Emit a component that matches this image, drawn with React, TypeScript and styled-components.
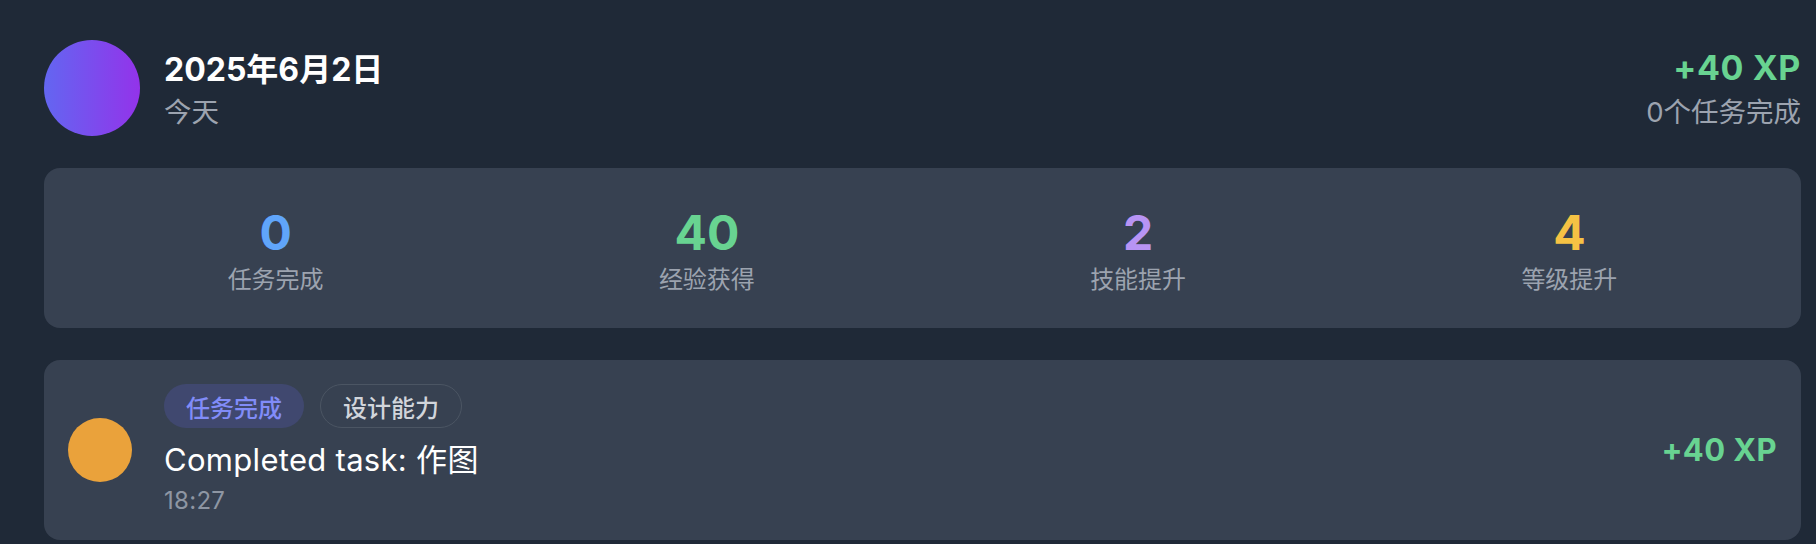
import React from 'react';
import styled, {createGlobalStyle} from 'styled-components';

const GlobalStyle = createGlobalStyle`
  html, body {
    margin: 0;
    padding: 0;
    background: #1f2937;
  }
  body {
    font-family: Inter, "Noto Sans CJK SC", "Noto Sans", sans-serif;
    color: #ffffff;
  }
  * {
    box-sizing: border-box;
  }
`;

type Stat = {value: number; label: string; color: string};

const stats: Stat[] = [
  {value: 0, label: '任务完成', color: '#60a5fa'},
  {value: 40, label: '经验获得', color: '#68d391'},
  {value: 2, label: '技能提升', color: '#b794f4'},
  {value: 4, label: '等级提升', color: '#f6c244'},
];

const App = () => {
  return (
    <>
      <GlobalStyle />
      <Page>
        <Header>
          <DayInfo>
            <Avatar />
            <DayText>
              <DateTitle>2025年6月2日</DateTitle>
              <SubText>今天</SubText>
            </DayText>
          </DayInfo>
          <DaySummary>
            <HeaderXp>+40 XP</HeaderXp>
            <SubText>0个任务完成</SubText>
          </DaySummary>
        </Header>

        <StatsCard>
          {stats.map((s) => (
            <StatItem key={s.label}>
              <StatValue color={s.color}>{s.value}</StatValue>
              <StatLabel>{s.label}</StatLabel>
            </StatItem>
          ))}
        </StatsCard>

        <EventCard>
          <EventDot />
          <EventBody>
            <Tags>
              <Tag variant="type">任务完成</Tag>
              <Tag variant="skill">设计能力</Tag>
            </Tags>
            <EventTitle>Completed task: 作图</EventTitle>
            <EventTime>18:27</EventTime>
          </EventBody>
          <EventXp>+40 XP</EventXp>
        </EventCard>
      </Page>
    </>
  );
};

const Page = styled.div`
  min-height: 100vh;
  padding: 40px 15px 0 44px;
  display: flex;
  flex-direction: column;
  gap: 32px;
`;

const Header = styled.div`
  display: flex;
  justify-content: space-between;
  align-items: center;
`;

const DayInfo = styled.div`
  display: flex;
  align-items: center;
  gap: 24px;
`;

const Avatar = styled.div`
  width: 96px;
  height: 96px;
  border-radius: 50%;
  background: linear-gradient(to right, #6366f1, #9333ea);
  flex-shrink: 0;
`;

const DayText = styled.div`
  display: flex;
  flex-direction: column;
  gap: 3px;
`;

const DateTitle = styled.div`
  padding-top: 3px;
  font-size: 32px;
  line-height: 42px;
  font-weight: 700;
  color: #ffffff;
`;

const SubText = styled.div`
  font-size: 27.5px;
  line-height: 36px;
  color: #9ca3af;
`;

const DaySummary = styled.div`
  display: flex;
  flex-direction: column;
  align-items: flex-end;
  gap: 5px;
`;

const HeaderXp = styled.div`
  font-size: 34px;
  line-height: 42px;
  font-weight: 700;
  letter-spacing: 0.6px;
  color: #68d391;
`;

const StatsCard = styled.div`
  background: #374151;
  border-radius: 16px;
  padding: 38px 32px 32px;
  display: grid;
  grid-template-columns: repeat(4, 1fr);
  gap: 32px;
`;

const StatItem = styled.div`
  display: flex;
  flex-direction: column;
  align-items: center;
  gap: 4px;
`;

const StatValue = styled.div<{color: string}>`
  font-size: 48px;
  line-height: 54px;
  font-weight: 700;
  color: ${({color}) => color};
`;

const StatLabel = styled.div`
  font-size: 24px;
  line-height: 32px;
  color: #9ca3af;
`;

const EventCard = styled.div`
  background: #374151;
  border-radius: 16px;
  padding: 24px;
  display: flex;
  align-items: center;
`;

const EventDot = styled.div`
  width: 64px;
  height: 64px;
  border-radius: 50%;
  background: #eaa23b;
  flex-shrink: 0;
  margin-right: 32px;
`;

const EventBody = styled.div`
  flex: 1;
  display: flex;
  flex-direction: column;
`;

const Tags = styled.div`
  display: flex;
  gap: 16px;
  margin-bottom: 12px;
`;

const Tag = styled.span<{variant: 'type' | 'skill'}>`
  height: 44px;
  padding: 0 22px;
  border-radius: 22px;
  display: inline-flex;
  align-items: center;
  font-size: 24px;
  font-weight: 500;
  background: ${({variant}) => (variant === 'type' ? '#40486f' : 'transparent')};
  color: ${({variant}) => (variant === 'type' ? '#818cf8' : '#d1d5db')};
  border: ${({variant}) => (variant === 'type' ? 'none' : '1.5px solid #4b5563')};
`;

const EventTitle = styled.div`
  font-size: 31px;
  line-height: 40px;
  letter-spacing: 0.3px;
  color: #ffffff;
`;

const EventTime = styled.div`
  margin-top: 6px;
  font-size: 24px;
  line-height: 30px;
  letter-spacing: 0.3px;
  color: #8e96a3;
`;

const EventXp = styled.div`
  font-size: 31px;
  line-height: 38px;
  font-weight: 700;
  letter-spacing: 0.4px;
  color: #68d391;
`;

export default App;
